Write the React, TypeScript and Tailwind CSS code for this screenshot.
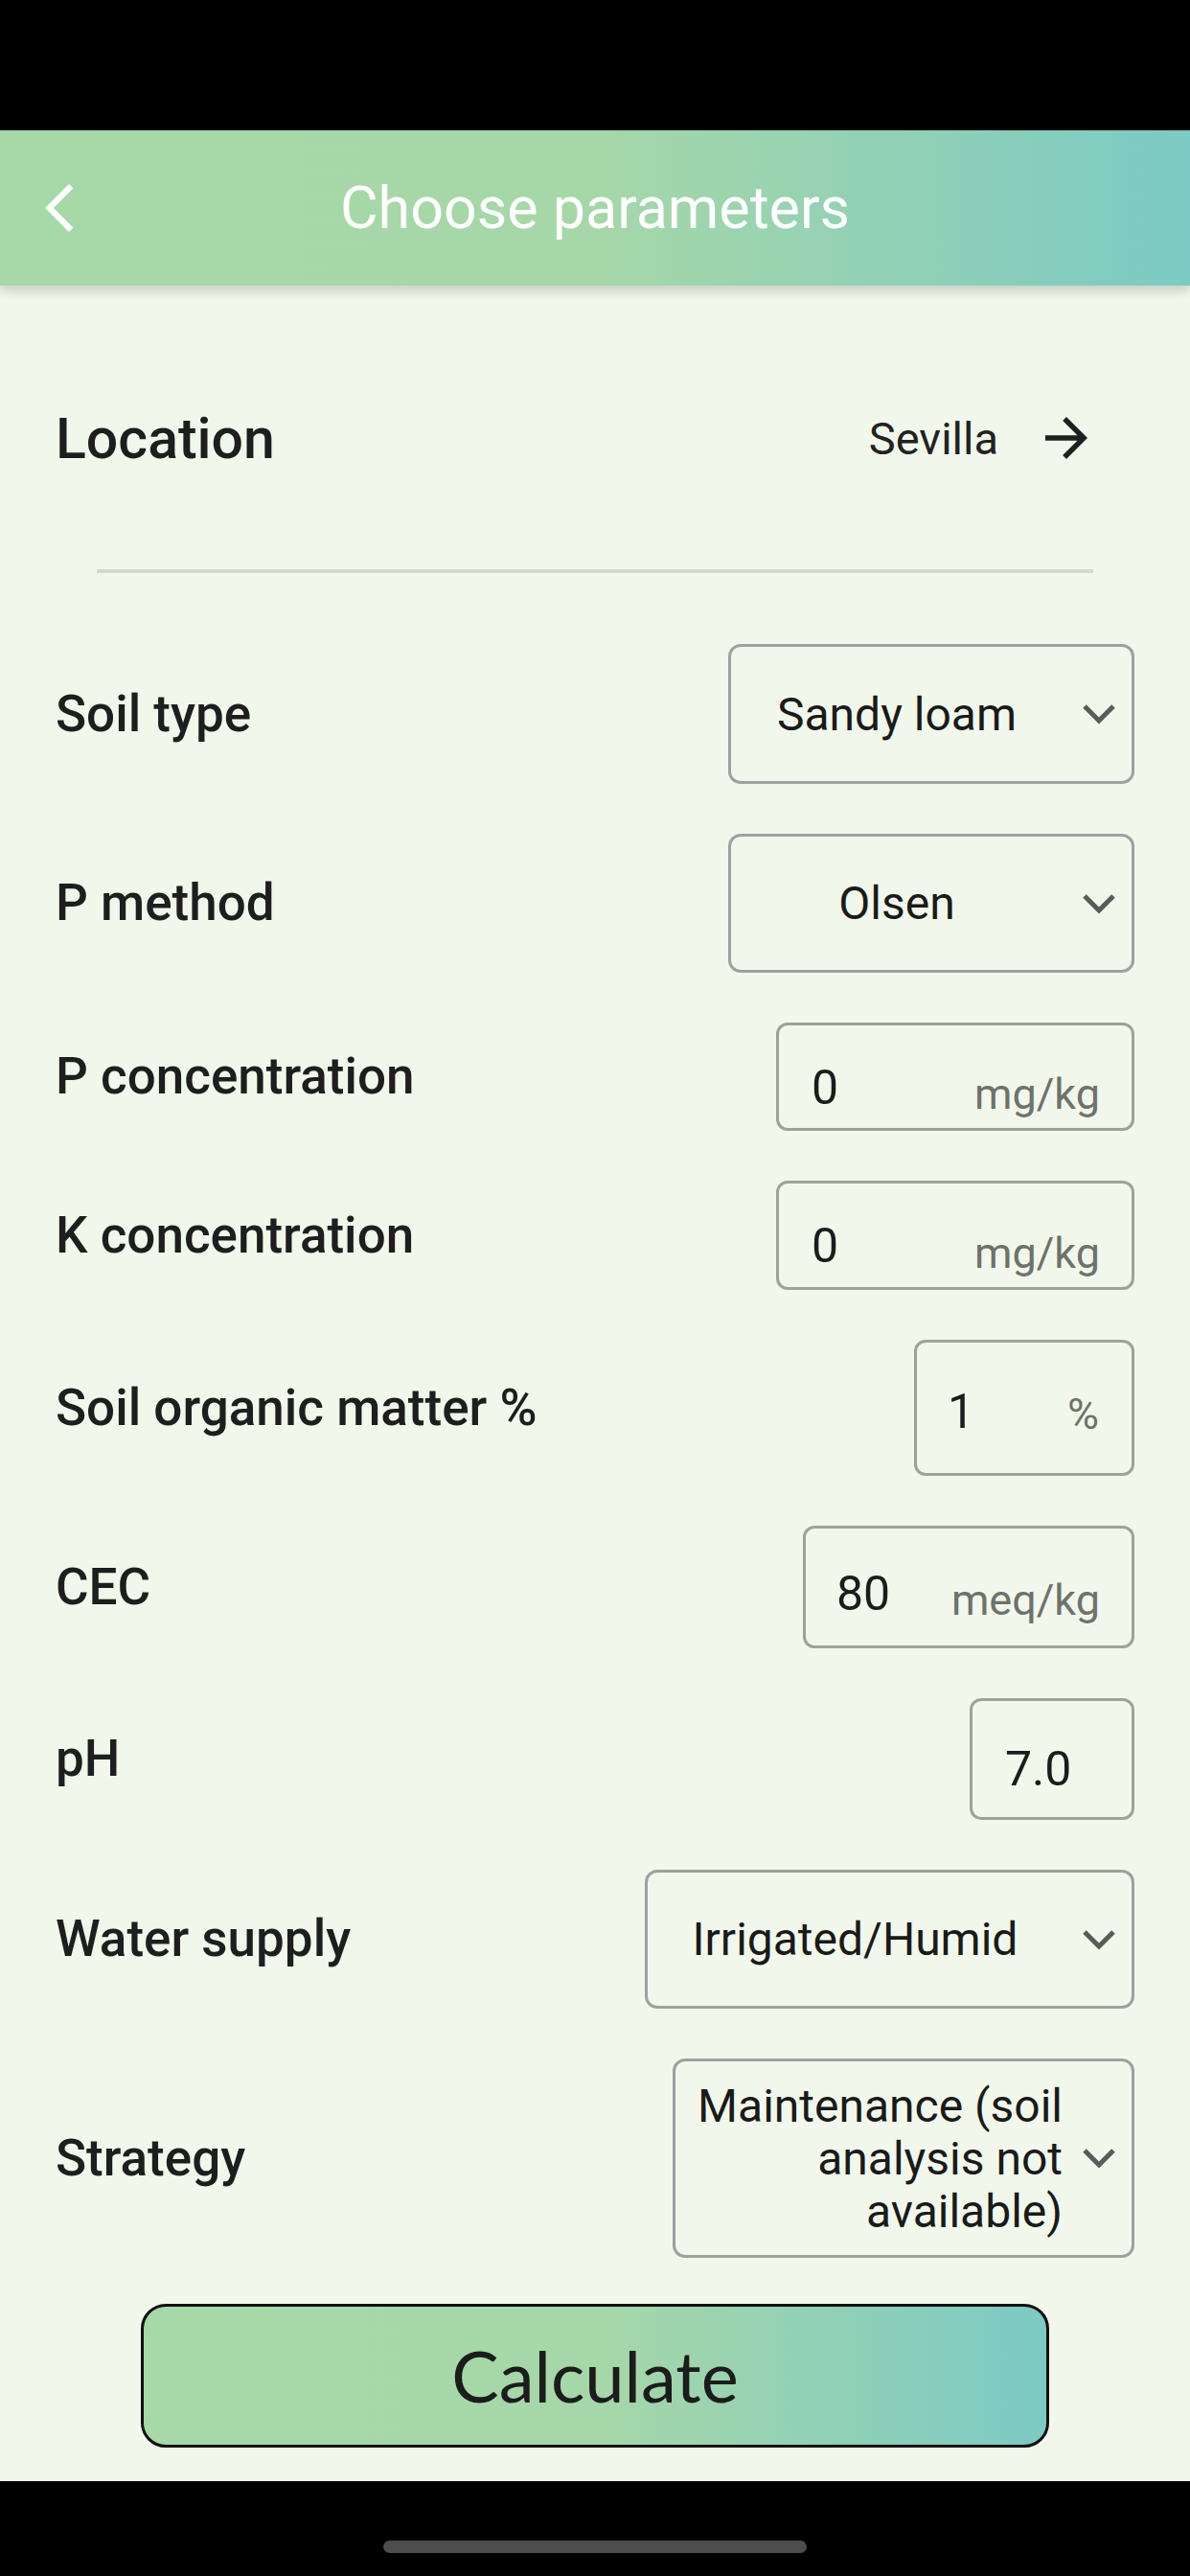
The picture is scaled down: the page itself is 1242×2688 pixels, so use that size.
import React from "react";

function Chevron() {
  return (
    <svg width="36" height="22" viewBox="0 0 36 22" className="shrink-0">
      <polyline points="3,3 18,18 33,3" fill="none" stroke="#5b5b5b" strokeWidth="5" />
    </svg>
  );
}

function Dropdown({ cls, children, right }: { cls: string; children: React.ReactNode; right?: boolean }) {
  return (
    <div className={`box-border flex items-center rounded-[13px] border-[3px] border-[#a0a0a0] pr-[16px] ${cls}`}>
      <div
        className={`flex-1 text-[48px] leading-[55px] text-[#1a1a1a] ${right ? "text-right" : "text-center"}`}
      >
        {children}
      </div>
      <div className="ml-[20px]">
        <Chevron />
      </div>
    </div>
  );
}

function NumInput({
  cls,
  value,
  unit,
  unitCls,
}: {
  cls: string;
  value: string;
  unit?: string;
  unitCls?: string;
}) {
  return (
    <div
      className={`box-border flex items-center justify-between rounded-[12px] border-[3px] border-[#9ba496] ${cls}`}
    >
      <span className="text-[50px] leading-none text-[#1c1c1c]">{value}</span>
      {unit ? <span className={`text-[45px] leading-none text-[#6e726c] ${unitCls ?? ""}`}>{unit}</span> : null}
    </div>
  );
}

function Label({ children }: { children: React.ReactNode }) {
  return <span className="text-[53px] font-medium leading-none text-[#1e1e1e]">{children}</span>;
}

function Row({ children }: { children: React.ReactNode }) {
  return <div className="flex items-center justify-between pl-[58px] pr-[58px]">{children}</div>;
}

export default function App() {
  return (
    <div className="flex h-[2688px] w-[1242px] flex-col bg-[#f1f8eb] [font-family:Roboto,'Noto_Sans',sans-serif]">
      {/* status bar */}
      <div className="h-[136px] shrink-0 bg-black" />

      {/* header */}
      <header className="relative z-10 grid h-[162px] shrink-0 grid-cols-[1fr_auto_1fr] items-center bg-[linear-gradient(to_right,#a6d8a8_0%,#a6d7a8_50%,#7ccac4_100%)] shadow-[0_6px_10px_rgba(0,0,0,0.16)]">
        <div className="flex items-center pl-[32px]">
          <svg width="60" height="60" viewBox="0 0 24 24">
            <path d="M17.77 3.77L16 2 6 12l10 10 1.77-1.77L9.54 12z" fill="white" />
          </svg>
        </div>
        <h1 className="text-[61px] font-normal leading-none text-white">Choose parameters</h1>
        <div />
      </header>

      {/* main */}
      <main className="flex flex-1 flex-col">
        <div className="mt-[109px] flex h-[100px] items-center justify-between pl-[58px] pr-[96px]">
          <span className="text-[59px] font-medium leading-none text-[#1e1e1e]">Location</span>
          <div className="flex items-center gap-[38px]">
            <span className="text-[47px] leading-none text-[#222]">Sevilla</span>
            <svg width="66" height="66" viewBox="0 0 24 24">
              <path d="M12 4l-1.41 1.41L16.17 11H4v2h12.17l-5.58 5.59L12 20l8-8z" fill="#1f1f1f" />
            </svg>
          </div>
        </div>

        <div className="mx-[101px] mt-[87px] h-[4px] bg-[#d5dacf]" />

        <div className="mt-[74px] flex flex-col gap-[52px]">
          <Row>
            <Label>Soil type</Label>
            <Dropdown cls="h-[146px] w-[424px]">Sandy loam</Dropdown>
          </Row>
          <Row>
            <Label>P method</Label>
            <Dropdown cls="h-[145px] w-[424px]">Olsen</Dropdown>
          </Row>
          <Row>
            <Label>P concentration</Label>
            <NumInput
              cls="h-[113px] w-[374px] pl-[34px] pr-[33px] pt-[22px]"
              value="0"
              unit="mg/kg"
              unitCls="translate-y-[7px]"
            />
          </Row>
          <Row>
            <Label>K concentration</Label>
            <NumInput
              cls="h-[114px] w-[374px] pl-[34px] pr-[33px] pt-[22px]"
              value="0"
              unit="mg/kg"
              unitCls="translate-y-[7px]"
            />
          </Row>
          <Row>
            <Label>Soil organic matter %</Label>
            <NumInput
              cls="h-[142px] w-[230px] pl-[32px] pr-[34px] pt-[8px]"
              value="1"
              unit="%"
              unitCls="translate-y-[2px]"
            />
          </Row>
          <Row>
            <Label>CEC</Label>
            <NumInput
              cls="h-[128px] w-[346px] pl-[32px] pr-[33px] pt-[14px]"
              value="80"
              unit="meq/kg"
              unitCls="translate-y-[6px]"
            />
          </Row>
          <Row>
            <Label>pH</Label>
            <NumInput cls="h-[127px] w-[172px] pl-[34px] pt-[20px]" value="7.0" />
          </Row>
          <Row>
            <Label>Water supply</Label>
            <Dropdown cls="h-[145px] w-[511px]">Irrigated/Humid</Dropdown>
          </Row>
          <Row>
            <Label>Strategy</Label>
            <Dropdown cls="h-[208px] w-[482px]" right>
              Maintenance (soil analysis not available)
            </Dropdown>
          </Row>
        </div>

        <button
          type="button"
          className="mx-auto mt-[48px] flex h-[150px] w-[948px] items-center justify-center rounded-[26px] border-[3px] border-[#111] bg-[linear-gradient(to_right,#a6d8a8_0%,#a6d7a8_50%,#7ccac4_100%)] text-[74px] leading-none text-[#1c1c1c] [font-family:Lato,sans-serif]"
        >
          Calculate
        </button>
      </main>

      {/* nav bar */}
      <div className="flex h-[99px] shrink-0 justify-center bg-black pt-[62px]">
        <div className="h-[13px] w-[442px] rounded-full bg-[#4d4d4d]" />
      </div>
    </div>
  );
}
